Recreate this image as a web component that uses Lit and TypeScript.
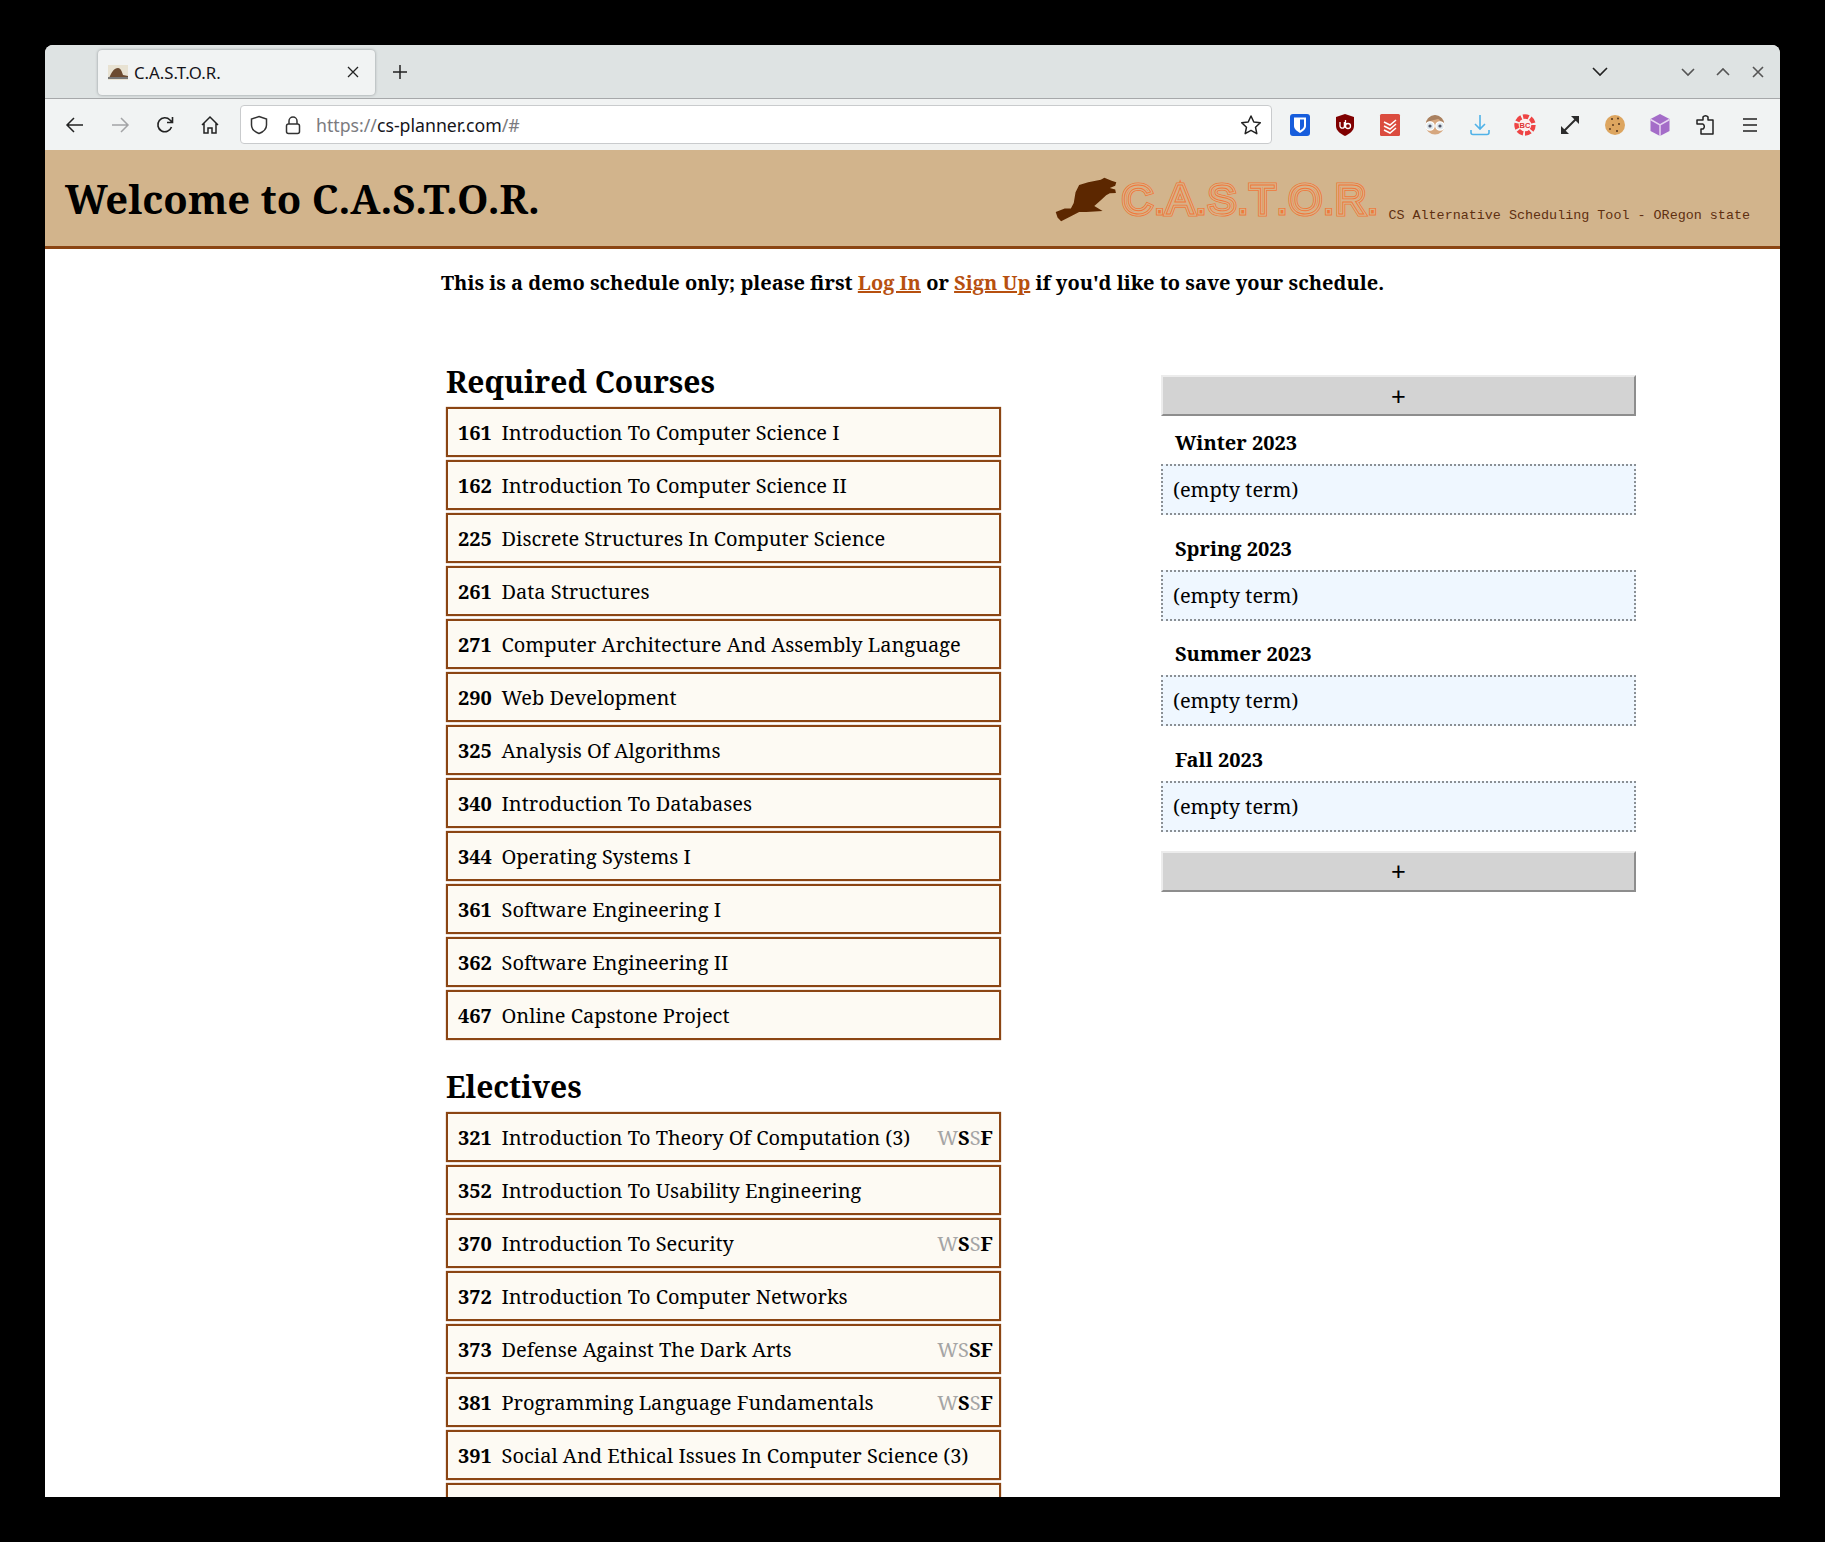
import { LitElement, html, css, svg } from 'lit';
import { customElement } from 'lit/decorators.js';

const required: [string, string][] = [
  ['161', 'Introduction To Computer Science I'],
  ['162', 'Introduction To Computer Science II'],
  ['225', 'Discrete Structures In Computer Science'],
  ['261', 'Data Structures'],
  ['271', 'Computer Architecture And Assembly Language'],
  ['290', 'Web Development'],
  ['325', 'Analysis Of Algorithms'],
  ['340', 'Introduction To Databases'],
  ['344', 'Operating Systems I'],
  ['361', 'Software Engineering I'],
  ['362', 'Software Engineering II'],
  ['467', 'Online Capstone Project'],
];

// last value is which of the W S S F terms are offered, upper case = offered
const electives: [string, string, string][] = [
  ['321', 'Introduction To Theory Of Computation (3)', 'wSsF'],
  ['352', 'Introduction To Usability Engineering', ''],
  ['370', 'Introduction To Security', 'wSsF'],
  ['372', 'Introduction To Computer Networks', ''],
  ['373', 'Defense Against The Dark Arts', 'wsSF'],
  ['381', 'Programming Language Fundamentals', 'wSsF'],
  ['391', 'Social And Ethical Issues In Computer Science (3)', ''],
  ['', '', ''],
];

const terms = ['Winter 2023', 'Spring 2023', 'Summer 2023', 'Fall 2023'];

const beaver = svg`<path d="M20 125L45 115L62 115L70 100L75 70L85 50L110 42L145 35L155 30L175 38L188 42L185 52L170 58L185 62L187 72L170 73L160 78L145 92L127 108L150 122L105 125L85 125L65 135L35 150L25 140Z"/>`;

const ext = {
  bitwarden: svg`<rect x="1" y="0" width="20" height="22" rx="3" fill="#175ddc"/><path d="M5 3.500h12v8.500c0 3-3 5-6 7-3-2-6-4-6-7z" fill="#fff"/><path d="M11 5.500h4v6.500c0 2-2 3-4 4.500z" fill="#175ddc"/>`,
  ublock: svg`<path d="M11 0l9 3v9c0 5-5 8-9 10-4-2-9-5-9-10V3z" fill="#800000"/><path d="M6 8v4a2.200 2.200 0 0 0 4.400 0V8M11.500 6v8M11.500 12a2.500 2.500 0 1 0 5 0 2.500 2.500 0 0 0-5 0" stroke="#fff" stroke-width="1.300" fill="none"/>`,
  todoist: svg`<rect x="1" y="0" width="20" height="22" rx="1.500" fill="#db4c3f"/><path d="M5 8l6 3 6-5M5 12l6 3 6-5M5 16l6 3 6-5" stroke="#fff" stroke-width="1.500" fill="none"/>`,
  face: svg`<circle cx="11" cy="11" r="9.500" fill="#d6a77f"/><path d="M2 10a9 9 0 0 1 18 0c-3-1-4-5-6-5-3 1-9 1-12 5z" fill="#a9805f"/><circle cx="6" cy="12" r="4.200" fill="#dfe9ee" stroke="#fff" stroke-width="1.300"/><circle cx="16" cy="12" r="4.200" fill="#dfe9ee" stroke="#fff" stroke-width="1.300"/><circle cx="6" cy="12" r="1.600" fill="#556"/><circle cx="16" cy="12" r="1.600" fill="#556"/>`,
  download: svg`<path d="M11 1v14M6 10l5 5 5-5M2 16v2.500a2 2 0 0 0 2 2h14a2 2 0 0 0 2-2V16" stroke="#50b2e8" stroke-width="1.600" fill="none"/>`,
  bc: svg`<circle cx="11" cy="11" r="8.200" fill="none" stroke="#ee4444" stroke-width="5" stroke-dasharray="5.500 1.800"/><circle cx="11" cy="11" r="6.300" fill="#fdf0ee"/><text x="11" y="14" font-size="7.500" font-weight="700" font-family="Liberation Sans" text-anchor="middle" fill="#d33">BC</text>`,
  arrows: svg`<path d="M5 17L17 5" stroke="#2b2b2b" stroke-width="2"/><path d="M12 2h8v8zM2 12v8h8z" fill="#2b2b2b"/>`,
  cookie: svg`<circle cx="11" cy="11" r="10" fill="#dda55f"/><circle cx="8" cy="5" r="1.100" fill="#5b3a1e"/><circle cx="14" cy="4.500" r="1" fill="#5b3a1e"/><circle cx="15" cy="10" r="1.100" fill="#5b3a1e"/><circle cx="9" cy="11" r="1" fill="#5b3a1e"/><circle cx="13" cy="17" r="1.100" fill="#5b3a1e"/><circle cx="6" cy="15" r=".9" fill="#5b3a1e"/>`,
  cube: svg`<path d="M11 0l9.500 5v12L11 22l-9.500-5V5z" fill="#a46cc8"/><path d="M1.500 5.500L11 11l9.500-5.500M11 11v11" stroke="#e7d5f1" stroke-width="1.500" fill="none"/>`,
};

@customElement('app-root')
export class AppRoot extends LitElement {
  static styles = css`
    :host {
      display: block;
      background: #000;
      height: 1542px;
      box-sizing: border-box;
      padding: 45px;
      font-family: 'Noto Serif', 'DejaVu Serif Condensed', 'DejaVu Serif', serif;
      color: #000;
    }
    .window {
      height: 1452px;
      background: #fff;
      border-radius: 8px 8px 0 0;
      overflow: hidden;
      display: flex;
      flex-direction: column;
    }

    /* browser chrome */
    .tabbar {
      height: 54px;
      background: #dee3e3;
      border-bottom: 1px solid #a6a8aa;
      display: flex;
      align-items: center;
      padding-left: 53px;
      box-sizing: border-box;
      font-family: 'Noto Sans', sans-serif;
      flex: none;
    }
    .tab {
      width: 277px;
      height: 45px;
      margin-top: 1px;
      box-sizing: border-box;
      background: #f1f3f3;
      border-radius: 4px;
      box-shadow: 0 0 3px #8f9496;
      display: flex;
      align-items: center;
      padding: 0 16px 0 10px;
      gap: 6px;
      font-size: 16.800px;
      color: #15141a;
    }
    .tab .title { flex: 1; }
    .newtab { margin-left: 17px; }
    .winctl {
      margin-left: auto;
      display: flex;
      align-items: center;
      padding-right: 14px;
    }
    .winctl .list { margin-right: 72px; }
    .winctl .btns { display: flex; gap: 19px; }
    .toolbar {
      height: 51px;
      background: #f1f3f3;
      display: flex;
      align-items: center;
      flex: none;
      box-sizing: border-box;
    }
    .navbtn { width: 45px; display: flex; justify-content: center; flex: none; }
    .navbtn:first-child { margin-left: 7px; }
    .urlbar {
      width: 1032px;
      height: 39px;
      box-sizing: border-box;
      background: #fff;
      border: 1px solid #c9cbcd;
      border-radius: 4px;
      margin-left: 8px;
      display: flex;
      align-items: center;
      padding: 0 9px 0 8px;
      font-family: 'Noto Sans', sans-serif;
      font-size: 17.700px;
      color: #15141a;
    }
    .urlbar .lock { margin-left: 15px; margin-right: 14px; }
    .urlbar .dim { color: #7b7b80; }
    .urlbar .star { margin-left: auto; }
    .exts { display: flex; align-items: center; margin-left: 17px; gap: 23px; }
    .exts svg { display: block; }
    .exts .menu { margin-left: 2px; }

    /* site header */
    .banner {
      height: 99px;
      box-sizing: border-box;
      background: #d2b48c;
      border-bottom: 3px solid #8b4513;
      display: flex;
      align-items: center;
      padding: 0 30px 0 20px;
      flex: none;
    }
    h1 {
      margin: 0;
      font-size: 40px;
      font-weight: 700;
      flex: 1;
      white-space: nowrap;
    }
    .logo { display: flex; align-items: flex-end; align-self: flex-end; margin-bottom: 23px; }
    .logo svg.bv { fill: #5c2700; margin: 0 5px 1px 0; }
    /* concentric lines of the wordmark: stacked text strokes, one span per letter */
    .wordmark {
      display: flex;
      font-family: 'Liberation Sans', sans-serif;
      font-size: 42px;
      line-height: 38px;
      margin-bottom: 4px;
    }
    .lt {
      position: relative;
      color: #f0783a;
      -webkit-text-stroke: 5px #f0783a;
      margin-right: 1px;
    }
    .lt::before, .lt::after {
      content: attr(data-c);
      position: absolute;
      left: 0;
      top: 0;
      color: transparent;
    }
    .lt::before { -webkit-text-stroke: 3.400px #d8b288; }
    .lt::after { -webkit-text-stroke: 0.900px #f0783a; }
    .lt.dot { -webkit-text-stroke-width: 3px; }
    .lt.dot::before { -webkit-text-stroke-width: 1.200px; }
    .lt.dot::after { -webkit-text-stroke-width: 0; }
    .tagline {
      font-family: 'Liberation Mono', monospace;
      font-size: 13.400px;
      line-height: 15px;
      color: #5e2f10;
      margin-left: 9px;
    }

    /* page */
    .notice {
      font-weight: 700;
      font-size: 20px;
      line-height: 27px;
      margin: 20px 0 0 396px;
      flex: none;
    }
    .notice a { color: #b7500f; }
    .columns {
      display: flex;
      margin-left: 401px;
      margin-top: 66px;
      align-items: flex-start;
      flex: none;
    }
    .courses { width: 555px; flex: none; }
    h2 {
      margin: 0 0 5px;
      font-size: 30px;
      line-height: 40px;
      font-weight: 700;
    }
    .elect { margin-top: 27px; }
    .course {
      height: 50px;
      box-sizing: border-box;
      margin-top: 3px;
      border: 2px solid #8b4513;
      box-shadow: 0 0 1px rgba(139, 69, 19, 0.8);
      background: #fdfaf3;
      display: flex;
      align-items: center;
      padding: 0 6px 0 10px;
      font-size: 20px;
      white-space: nowrap;
    }
    .course b { width: 34px; margin-right: 9.500px; }
    .avail { margin-left: auto; }
    .avail .off { color: #a5a5a5; }
    .course .avail b { width: auto; margin: 0; }
    .plan { width: 475px; margin-left: 160px; margin-top: 13px; flex: none; }
    .addterm {
      height: 41px;
      box-sizing: border-box;
      background: #d3d3d3;
      border: 2px solid;
      border-color: #ececec #8d8d8d #8d8d8d #ececec;
      display: flex;
      align-items: center;
      justify-content: center;
      font-family: 'Noto Sans', sans-serif;
      font-size: 26px;
    }
    .term-name {
      font-weight: 700;
      font-size: 20px;
      line-height: 27px;
      margin: 13px 0 8px 14px;
    }
    .term-box {
      height: 51px;
      box-sizing: border-box;
      border: 2px dotted #8a8f94;
      background: #eff7ff;
      display: flex;
      align-items: center;
      padding-left: 10px;
      font-size: 20px;
    }
    .term + .term .term-name { margin-top: 19.500px; }
    .plan .addterm:last-child { margin-top: 19px; }
  `;

  private ico(paths: unknown, size = 22) {
    return html`<svg width=${size} height=${size} viewBox="0 0 22 22">${paths}</svg>`;
  }

  private row(num: string, name: string, avail = '') {
    return html`<div class="course">
      <b>${num}</b><span>${name}</span>
      ${avail
        ? html`<span class="avail">${[...avail].map(c =>
            c === c.toUpperCase() ? html`<b>${c}</b>` : html`<span class="off">${c.toUpperCase()}</span>`
          )}</span>`
        : ''}
    </div>`;
  }

  render() {
    return html`
      <div class="window">
        <div class="tabbar">
          <div class="tab">
            <svg width="20" height="15" viewBox="0 0 20 15"><rect width="20" height="15" fill="#e8e2d2"/><path d="M2 11C4 7 6 3 10 3c3 0 4 4 5 7l5 1v2H1z" fill="#6b4a30"/><rect x="0" y="12" width="20" height="2" fill="#777"/></svg>
            <span class="title">C.A.S.T.O.R.</span>
            <svg width="12" height="12" viewBox="0 0 12 12"><path d="M1 1l10 10M11 1L1 11" stroke="#222" stroke-width="1.300"/></svg>
          </div>
          <svg class="newtab" width="16" height="16" viewBox="0 0 16 16"><path d="M8 1v14M1 8h14" stroke="#222" stroke-width="1.500"/></svg>
          <div class="winctl">
            <svg class="list" width="16" height="10" viewBox="0 0 16 10"><path d="M1 1l7 7 7-7" fill="none" stroke="#222" stroke-width="1.600"/></svg>
            <div class="btns">
              <svg width="16" height="16" viewBox="0 0 16 16"><path d="M2 5l6 6 6-6" fill="none" stroke="#555" stroke-width="1.600"/></svg>
              <svg width="16" height="16" viewBox="0 0 16 16"><path d="M2 11l6-6 6 6" fill="none" stroke="#555" stroke-width="1.600"/></svg>
              <svg width="16" height="16" viewBox="0 0 16 16"><path d="M3 3l10 10M13 3L3 13" fill="none" stroke="#555" stroke-width="1.600"/></svg>
            </div>
          </div>
        </div>
        <div class="toolbar">
          <div class="navbtn"><svg width="20" height="20" viewBox="0 0 20 20"><path d="M18 10H2M9 3l-7 7 7 7" fill="none" stroke="#222" stroke-width="1.500"/></svg></div>
          <div class="navbtn"><svg width="20" height="20" viewBox="0 0 20 20"><path d="M2 10h16M11 3l7 7-7 7" fill="none" stroke="#a3a4a6" stroke-width="1.500"/></svg></div>
          <div class="navbtn"><svg width="20" height="20" viewBox="0 0 20 20"><path d="M16.500 12a7 7 0 1 1-1.500-7l2 2M17.500 2v5.500H12" fill="none" stroke="#222" stroke-width="1.600"/></svg></div>
          <div class="navbtn"><svg width="20" height="20" viewBox="0 0 20 20"><path d="M2 10l8-8 8 8M4 8.500V18h4v-5h4v5h4V8.500" fill="none" stroke="#222" stroke-width="1.500"/></svg></div>
          <div class="urlbar">
            <svg width="20" height="20" viewBox="0 0 20 20"><path d="M10 1.500l7.500 2.500v6c0 4-3.500 7-7.500 8.500C6 17 2.500 14 2.500 10V4z" fill="none" stroke="#333" stroke-width="1.500"/></svg>
            <svg class="lock" width="18" height="20" viewBox="0 0 18 20"><rect x="2.500" y="9" width="13" height="9.500" rx="2" fill="none" stroke="#333" stroke-width="1.500"/><path d="M5 9V6a4 4 0 0 1 8 0v3" fill="none" stroke="#333" stroke-width="1.500"/></svg>
            <span><span class="dim">https://</span>cs-planner.com<span class="dim">/#</span></span>
            <svg class="star" width="22" height="22" viewBox="0 0 22 22"><path d="M11 2l2.800 6 6.500.8-4.800 4.400 1.300 6.500L11 16.400l-5.800 3.300 1.300-6.500L1.700 8.800 8.200 8z" fill="none" stroke="#222" stroke-width="1.500" stroke-linejoin="round"/></svg>
          </div>
          <div class="exts">
            ${this.ico(ext.bitwarden)}${this.ico(ext.ublock)}${this.ico(ext.todoist)}${this.ico(ext.face)}${this.ico(ext.download)}${this.ico(ext.bc)}${this.ico(ext.arrows)}${this.ico(ext.cookie)}${this.ico(ext.cube)}
            <svg width="22" height="22" viewBox="0 0 22 22"><path d="M9 3a3 3 0 0 1 5 0v3h5v14H7v-5h2a3 3 0 0 0 0-5H3V6h6z" fill="none" stroke="#222" stroke-width="1.500" stroke-linejoin="round"/></svg>
            <svg class="menu" width="18" height="18" viewBox="0 0 18 18"><path d="M2 3h14M2 9h14M2 15h14" stroke="#222" stroke-width="1.600"/></svg>
          </div>
        </div>

        <div class="banner">
          <h1>Welcome to C.A.S.T.O.R.</h1>
          <div class="logo">
            <svg class="bv" width="62" height="45" viewBox="18 28 172 124">${beaver}</svg>
            <span class="wordmark">${[...'C.A.S.T.O.R.'].map(c =>
              html`<span class="lt ${c === '.' ? 'dot' : ''}" data-c=${c}>${c}</span>`
            )}</span>
            <span class="tagline">CS Alternative Scheduling Tool - ORegon state</span>
          </div>
        </div>

        <div class="notice">
          This is a demo schedule only; please first <a href="#">Log In</a> or <a href="#">Sign Up</a> if you'd like to save your schedule.
        </div>

        <div class="columns">
          <div class="courses">
            <h2>Required Courses</h2>
            ${required.map(([n, t]) => this.row(n, t))}
            <h2 class="elect">Electives</h2>
            ${electives.map(([n, t, a]) => this.row(n, t, a))}
          </div>
          <div class="plan">
            <div class="addterm">+</div>
            ${terms.map(t => html`<div class="term">
              <div class="term-name">${t}</div>
              <div class="term-box">(empty term)</div>
            </div>`)}
            <div class="addterm">+</div>
          </div>
        </div>
      </div>
    `;
  }
}
